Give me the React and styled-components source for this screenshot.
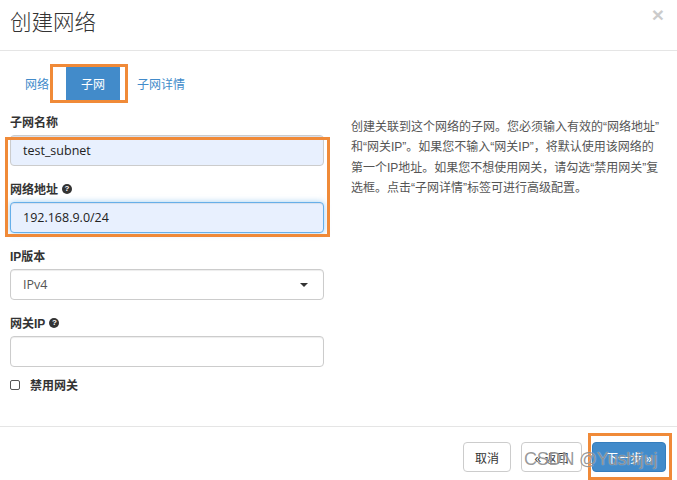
import React from "react";
import styled, { createGlobalStyle } from "styled-components";

const Global = createGlobalStyle`
  html, body { margin: 0; padding: 0; background: #fff; }
  body {
    font-family: "Liberation Sans", "Noto Sans CJK SC", sans-serif;
    font-size: 12px;
    color: #333;
  }
  * { box-sizing: border-box; }
`;

const Modal = styled.div`
  position: relative;
  width: 677px;
  height: 480px;
  background: #fff;
  overflow: hidden;
  display: flex;
  flex-direction: column;
`;

const Header = styled.div`
  height: 51px;
  border-bottom: 1px solid #e5e5e5;
  display: flex;
  align-items: center;
  justify-content: space-between;
  padding: 0 13px 8px 10px;
`;

const Title = styled.h4`
  margin: 0;
  font-family: "Noto Sans CJK SC", sans-serif;
  font-weight: 300;
  font-size: 21.5px;
  line-height: 28px;
  color: #333;
`;

const Close = styled.span`
  font-family: "Liberation Sans", sans-serif;
  font-size: 21px;
  font-weight: bold;
  line-height: 1;
  color: #000;
  opacity: 0.2;
  margin-top: -14px;
`;

const Body = styled.div`
  padding: 13px 10px 0;
  flex: 1;
`;

const Tabs = styled.ul`
  list-style: none;
  margin: 0;
  padding: 0;
  display: flex;
  height: 38px;
`;

const Tab = styled.li`
  margin-right: 2px;
  padding: 0 15px;
  height: 38px;
  display: flex;
  align-items: center;
  font-family: "Noto Sans CJK SC", sans-serif;
  font-size: 12px;
  border-radius: 4px 4px 0 0;
  color: ${(p) => (p.$active ? "#fff" : "#428bca")};
  background: ${(p) => (p.$active ? "#428bca" : "transparent")};
`;

const Row = styled.div`
  display: flex;
  gap: 27px;
  margin-top: 11px;
`;

const FormCol = styled.div`
  width: 314px;
  flex: none;
`;

const HelpCol = styled.div`
  flex: 1;
  margin: 4px -10px 0 0;
  font-family: "Liberation Sans", "Noto Sans CJK SC", sans-serif;
  font-size: 12px;
  line-height: 20.3px;
  color: #555;
`;

const HelpLine = styled.span`
  display: block;
  white-space: nowrap;
`;

const Group = styled.div`
  margin-bottom: 14px;
`;

const Label = styled.label`
  display: flex;
  align-items: center;
  gap: 4px;
  height: 17px;
  margin-bottom: 5px;
  font-family: "Liberation Sans", "Noto Sans CJK SC", sans-serif;
  font-weight: bold;
  font-size: 12px;
  color: #333;
`;

const Help = styled.span`
  display: inline-flex;
  align-items: center;
  justify-content: center;
  width: 10px;
  height: 10px;
  border-radius: 50%;
  background: #333;
  color: #fff;
  font-size: 8px;
  font-weight: bold;
  line-height: 1;
`;

const Input = styled.div`
  height: 31px;
  border: 1px solid ${(p) => (p.$focus ? "#66afe9" : "#ccc")};
  border-radius: 4px;
  background: ${(p) => (p.$fill ? "#e8f0fe" : "#fff")};
  box-shadow: inset 0 1px 1px rgba(0, 0, 0, 0.075)
    ${(p) => (p.$focus ? ", 0 0 6px rgba(102, 175, 233, 0.6)" : "")};
  padding: 0 12px;
  display: flex;
  align-items: center;
  justify-content: space-between;
  font-family: "Open Sans", "Liberation Sans", sans-serif;
  font-size: 12.5px;
  color: ${(p) => (p.$muted ? "#555" : "#222")};
`;

const Caret = styled.span`
  width: 0;
  height: 0;
  border-left: 4px solid transparent;
  border-right: 4px solid transparent;
  border-top: 4px solid #333;
  margin-right: 3px;
`;

const CheckRow = styled.div`
  display: flex;
  align-items: center;
  gap: 10px;
  margin-top: -5px;
  font-family: "Noto Sans CJK SC", sans-serif;
  font-weight: bold;
  font-size: 12px;
  color: #333;
`;

const Box = styled.span`
  width: 10px;
  height: 10px;
  border: 1px solid #555;
  border-radius: 2px;
  background: #fff;
`;

const Footer = styled.div`
  height: 54px;
  border-top: 1px solid #e5e5e5;
  display: flex;
  justify-content: flex-end;
  align-items: flex-start;
  gap: 10px;
  padding: 15px 11px 0 0;
`;

const Button = styled.div`
  width: ${(p) => p.$w}px;
  height: 30px;
  border-radius: 4px;
  border: 1px solid ${(p) => (p.$primary ? "#357ebd" : "#ccc")};
  background: ${(p) => (p.$primary ? "#428bca" : "#fff")};
  color: ${(p) => (p.$primary ? "#fff" : "#333")};
  display: flex;
  align-items: center;
  justify-content: center;
  gap: 4px;
  font-family: "Liberation Sans", "Noto Sans CJK SC", sans-serif;
  font-size: 12px;
`;

const Mark = styled.div`
  position: absolute;
  border: 3px solid #f08a38;
  pointer-events: none;
`;

const Watermark = styled.div`
  position: absolute;
  left: 524px;
  top: 449px;
  font-family: "Liberation Sans", sans-serif;
  font-size: 18px;
  color: rgba(110, 110, 110, 0.7);
  text-shadow: 0 0 1px rgba(255, 255, 255, 0.8);
  white-space: nowrap;
  letter-spacing: -0.2px;
`;

export default function App() {
  return (
    <>
      <Global />
      <Modal>
        <Header>
          <Title>创建网络</Title>
          <Close>×</Close>
        </Header>
        <Body>
          <Tabs>
            <Tab>网络</Tab>
            <Tab $active>子网</Tab>
            <Tab>子网详情</Tab>
          </Tabs>
          <Row>
            <FormCol>
              <Group>
                <Label>子网名称</Label>
                <Input $fill>test_subnet</Input>
              </Group>
              <Group>
                <Label>
                  网络地址 <Help>?</Help>
                </Label>
                <Input $fill $focus>192.168.9.0/24</Input>
              </Group>
              <Group>
                <Label>IP版本</Label>
                <Input $muted>
                  IPv4
                  <Caret />
                </Input>
              </Group>
              <Group>
                <Label>
                  网关IP <Help>?</Help>
                </Label>
                <Input />
              </Group>
              <CheckRow>
                <Box />
                禁用网关
              </CheckRow>
            </FormCol>
            <HelpCol>
              <HelpLine>创建关联到这个网络的子网。您必须输入有效的“网络地址”</HelpLine>
              <HelpLine>和“网关IP”。如果您不输入“网关IP”，将默认使用该网络的</HelpLine>
              <HelpLine>第一个IP地址。如果您不想使用网关，请勾选“禁用网关”复</HelpLine>
              <HelpLine>选框。点击“子网详情”标签可进行高级配置。</HelpLine>
            </HelpCol>
          </Row>
        </Body>
        <Footer>
          <Button $w={48}>取消</Button>
          <Button $w={61}>« 返回</Button>
          <Button $w={74} $primary>下一步 »</Button>
        </Footer>
        <Mark style={{ left: 50, top: 64, width: 78, height: 39 }} />
        <Mark style={{ left: 5, top: 137, width: 325, height: 100 }} />
        <Mark style={{ left: 588, top: 433, width: 84, height: 47 }} />
        <Watermark>CSDN @Yushijuj</Watermark>
      </Modal>
    </>
  );
}
